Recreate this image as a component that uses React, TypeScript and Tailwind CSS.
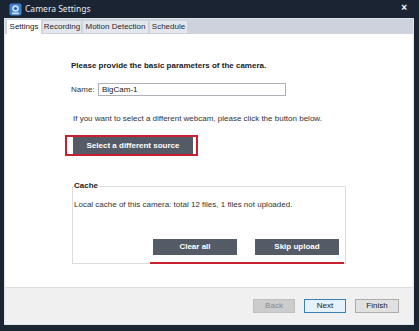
import React from 'react'

function CamIcon(): JSX.Element {
  return (
    <svg width="13" height="13" viewBox="0 0 13 13">
      <rect x="0.5" y="0.5" width="12" height="12" rx="2" fill="#3f7fd0" />
      <circle cx="6.5" cy="5.5" r="3.3" fill="#cfe2fb" />
      <circle cx="6.5" cy="5.5" r="1.6" fill="#2a5da8" />
      <rect x="3" y="9.6" width="7" height="1.6" rx="0.6" fill="#cfe2fb" />
    </svg>
  )
}

const tabs = [
  { label: 'Settings', w: 'w-[34px]', active: true },
  { label: 'Recording', w: 'w-[38px]', active: false },
  { label: 'Motion Detection', w: 'w-[65px]', active: false },
  { label: 'Schedule', w: 'w-[37px]', active: false },
]

export default function App(): JSX.Element {
  return (
    <div className="flex h-[331px] w-[419px] flex-col bg-[#1b2433] font-['Liberation_Sans',Arial,sans-serif] text-[8px] leading-[10px] text-[#1a1a1a]">
      {/* title bar */}
      <div className="relative flex h-[18px] items-center pl-[9px]">
        <CamIcon />
        <span className="ml-[3px] font-['Noto_Sans',sans-serif] text-[8.5px] leading-[12px] text-[#e8ecf2]">Camera Settings</span>
        <span className="absolute right-[12px] top-[3px] text-[10px] font-bold leading-[10px] text-white">×</span>
      </div>

      <div className="mb-[6px] ml-[4px] mr-[5px] flex flex-1 flex-col border border-[#dfe3ea]">
        {/* tabs */}
        <div className="flex h-[15px] items-end gap-[2px] bg-[#cdd2dd] pl-[2px]">
          {tabs.map((t) => (
            <div
              key={t.label}
              className={
                t.active
                  ? `${t.w} flex h-[14px] items-center justify-center bg-white`
                  : `${t.w} mb-[1px] flex h-[12px] items-center justify-center bg-[#e3e6ed] text-[#2a2a2a]`
              }
            >
              {t.label}
            </div>
          ))}
        </div>

        {/* content */}
        <div className="flex flex-1 flex-col bg-white pl-[60px]">
          <div className="ml-[6px] mt-[27px] font-bold">Please provide the basic parameters of the camera.</div>

          <div className="ml-[6px] mt-[12px] flex items-center">
            <span className="w-[27px] text-[#333]">Name:</span>
            <div className="flex h-[13px] w-[188px] items-center border border-[#aeb2b8] bg-white pl-[3px]">BigCam-1</div>
          </div>

          <div className="ml-[8px] mt-[18px] text-[#333]">If you want to select a different webcam, please click the button below.</div>

          <div className="mt-[11px] w-[133px] border-2 border-[#c8202f] pl-[6px] pr-[3px]">
            <button className="h-[17px] w-[120px] bg-[#555b66] text-[8px] font-bold text-white">Select a different source</button>
          </div>

          <fieldset className="relative ml-[7px] mt-[25px] h-[83px] w-[273px] border border-[#dcdcdc] px-[1px]">
            <legend className="pr-[1px] font-bold">Cache</legend>
            <div className="mt-[9px] text-[#333]">Local cache of this camera: total 12 files, 1 files not uploaded.</div>
            <div className="mt-[29px] flex justify-end gap-[18px] pr-[5px]">
              <button className="h-[16px] w-[84px] bg-[#555b66] text-[8px] font-bold text-white">Clear all</button>
              <button className="h-[16px] w-[84px] bg-[#555b66] text-[8px] font-bold text-white">Skip upload</button>
            </div>
            <div className="ml-[76px] mt-[7px] h-[2px] w-[194px] bg-[#c8202f]" />
          </fieldset>
        </div>

        {/* footer */}
        <div className="flex h-[37px] items-center justify-end gap-[9px] border-t border-[#dcdcdc] bg-[#f0f0f0] pr-[14px]">
          <button className="h-[14px] w-[42px] border border-[#bfbfbf] bg-[#cccccc] text-[8px] text-[#8a8a8a]">Back</button>
          <button className="h-[14px] w-[42px] border border-[#3c7fb1] bg-[#e5f1fb] text-[8px] text-[#1a1a1a]">Next</button>
          <button className="h-[14px] w-[44px] border border-[#adadad] bg-[#e1e1e1] text-[8px] text-[#1a1a1a]">Finish</button>
        </div>
      </div>
    </div>
  )
}
